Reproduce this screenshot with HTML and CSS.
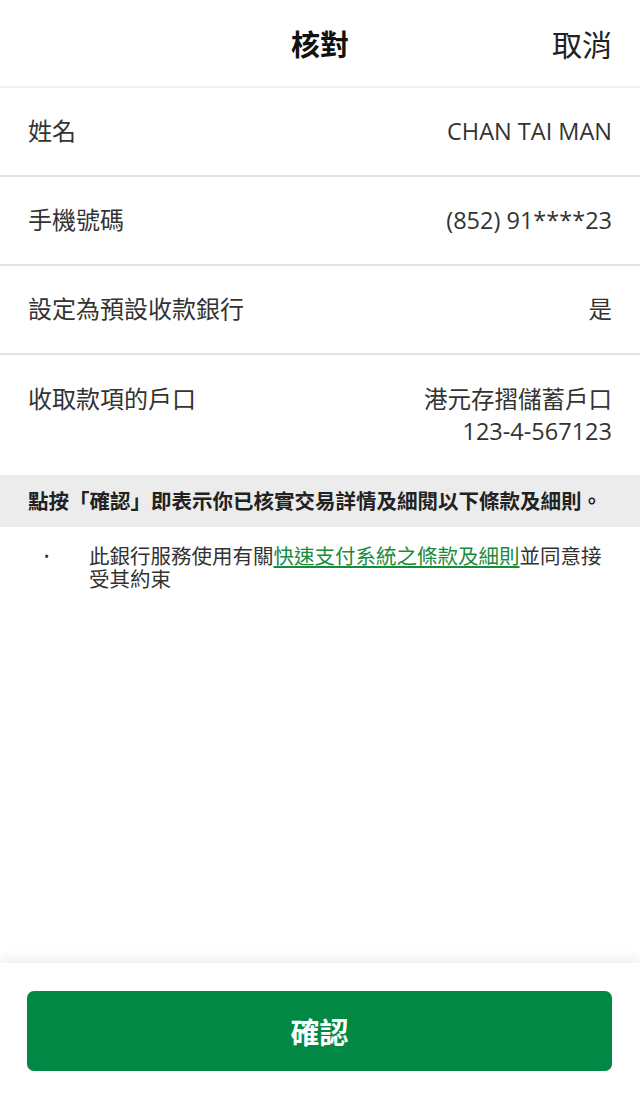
FILE: index.html
```html
<!DOCTYPE html>
<html lang="zh-Hant">
<head>
    <meta charset="utf-8">
    <meta name="viewport" content="width=device-width, initial-scale=1.0">
    <title>核對</title>
    <link rel="stylesheet" href="styles.css">
</head>
<body>
    <div class="page">
        <header class="top-bar">
            <span></span>
            <h1 class="title">核對</h1>
            <a class="cancel" href="#">取消</a>
        </header>

        <main class="content">
            <div class="row">
                <div class="label">姓名</div>
                <div class="value">CHAN TAI MAN</div>
            </div>
            <div class="row">
                <div class="label">手機號碼</div>
                <div class="value">(852) 91****23</div>
            </div>
            <div class="row">
                <div class="label">設定為預設收款銀行</div>
                <div class="value">是</div>
            </div>
            <div class="row row-tall">
                <div class="label">收取款項的戶口</div>
                <div class="value">港元存摺儲蓄戶口<br>123-4-567123</div>
            </div>

            <div class="notice">點按「確認」即表示你已核實交易詳情及細閱以下條款及細則。</div>

            <ul class="terms">
                <li>
                    <span class="dot">•</span>
                    <p class="term-text">此銀行服務使用有關<a href="#">快速支付系統之條款及細則</a>並同意接受其約束</p>
                </li>
            </ul>
        </main>

        <footer class="bottom-bar">
            <button class="confirm">確認</button>
        </footer>
    </div>
</body>
</html>
```

FILE: styles.css
```css
body {
    margin: 0;
    font-family: "Open Sans", "Noto Sans CJK TC", sans-serif;
    color: #333;
    background: #fff;
}
.page {
    display: flex;
    flex-direction: column;
    min-height: 1100px;
}
.top-bar {
    display: grid;
    grid-template-columns: 1fr auto 1fr;
    align-items: center;
    height: 86px;
    padding: 0 28px;
    border-bottom: 2px solid #f0f0f0;
}
.title {
    margin: 0;
    font-size: 29px;
    font-weight: bold;
    color: #111;
}
.cancel {
    justify-self: end;
    font-size: 30px;
    color: #222;
    text-decoration: none;
}
.content {
    flex: 1;
}
.row {
    display: flex;
    justify-content: space-between;
    align-items: flex-start;
    padding: 27px 28px 28px 28px;
    line-height: 32px;
    border-bottom: 2px solid #e2e2e2;
}
.row-tall {
    padding-top: 28px;
    padding-bottom: 28px;
    border-bottom: none;
}
.label {
    font-size: 24px;
    color: #333;
}
.value {
    font-size: 23.5px;
    color: #333;
    text-align: right;
}
.notice {
    background: #ececec;
    height: 52px;
    line-height: 52px;
    padding: 0 28px;
    font-size: 20.5px;
    font-weight: bold;
    color: #222;
    white-space: nowrap;
}
.terms {
    list-style: none;
    margin: 0;
    padding: 18px 36px 0 28px;
}
.terms li {
    display: flex;
    font-size: 20.5px;
    line-height: 23px;
    color: #333;
}
.terms .dot {
    width: 61px;
    flex-shrink: 0;
    padding-left: 16px;
    box-sizing: border-box;
    font-size: 14px;
}
.term-text {
    margin: 0;
}
.terms a {
    color: #1a8a3c;
    text-decoration: underline;
}
.bottom-bar {
    padding: 28px 28px 29px 27px;
    box-shadow: 0 -6px 10px rgba(0,0,0,0.06);
}
.confirm {
    display: block;
    width: 100%;
    height: 80px;
    border: none;
    border-radius: 7px;
    background: #008844;
    color: #fff;
    font-family: "Open Sans", "Noto Sans CJK TC", sans-serif;
    font-size: 29px;
    font-weight: bold;
    cursor: pointer;
}
```
